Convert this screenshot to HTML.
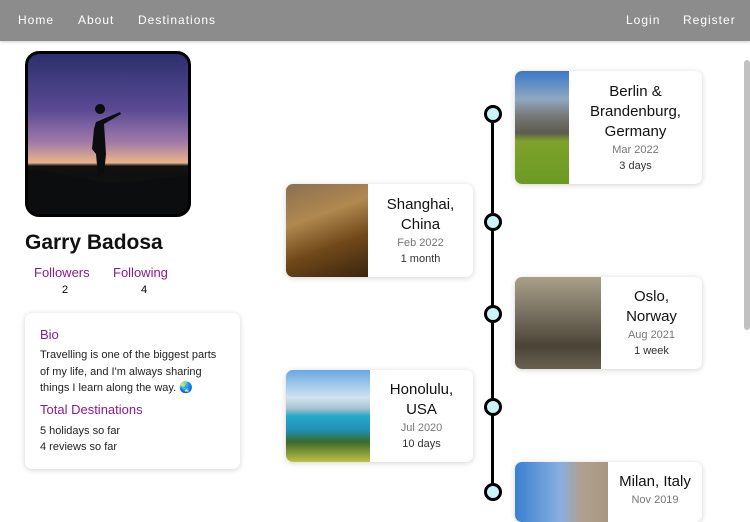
<!DOCTYPE html>
<html><head><style>
*{margin:0;padding:0;box-sizing:border-box}
body{width:750px;height:499px;overflow:hidden;background:#fff;font-family:"Liberation Sans",sans-serif;position:relative}
.nav{position:absolute;left:0;top:0;width:750px;height:41px;background:#8c8c8c;box-shadow:0 1px 3px rgba(0,0,0,.2)}
.nav span{position:absolute;top:13px;color:#fff;font-size:12px;letter-spacing:1px}
.ab{position:absolute}
.pic{left:25px;top:51px;width:166px;height:166px;border:3px solid #000;border-radius:14px;overflow:hidden;background:linear-gradient(180deg,#2d2f6e 0%,#5a4a94 35%,#a07aa8 55%,#e9b58a 68%,#111 70%,#0b0d0e 100%)}
.name{left:25px;top:231px;font-size:21px;font-weight:bold;color:#111}
.purple{color:#8b1a8b}
.card{position:absolute;background:#fff;border-radius:7px;box-shadow:0 1px 6px rgba(0,0,0,.18);overflow:hidden}
.card .img{position:absolute;left:0;top:0;bottom:0}
.card .txt{position:absolute;top:0;bottom:0;right:0;display:flex;flex-direction:column;align-items:center;justify-content:center;text-align:center}
.t{font-family:"Comic Sans MS","Liberation Sans",cursive;font-size:15px;line-height:20px;color:#111}
.d{font-size:11px;color:#777;line-height:16px}
.l{font-size:11px;color:#333;line-height:16px}
.line{left:491px;top:105px;width:3px;height:394px;background:#000}
.dot{position:absolute;left:484px;width:18px;height:18px;border-radius:50%;background:#c8f4f8;border:3px solid #000}
</style></head><body>
<div class="nav"><span style="left:18px">Home</span><span style="left:78px">About</span><span style="left:138px">Destinations</span><span style="left:626px">Login</span><span style="left:683px">Register</span></div>
<div class="ab pic"><svg width="160" height="160" viewBox="0 0 160 160" style="position:absolute;left:0;top:0"><path d="M0 115 Q40 120 70 128 Q110 130 160 120 L160 160 L0 160Z" fill="#0b0d0e"/><path d="M72 60 a5 5 0 1 1 0.1 0 M68 68 L92 58 L93 60 L76 70 L78 100 L76 120 L70 122 L68 100 L64 95 L66 75Z" fill="#0b0d0e"/></svg></div>
<div class="ab name">Garry Badosa</div>
<div class="ab purple" style="left:34px;top:265px;font-size:13px">Followers</div>
<div class="ab purple" style="left:113px;top:265px;font-size:13px">Following</div>
<div class="ab" style="left:62px;top:284px;font-size:11px">2</div>
<div class="ab" style="left:141px;top:284px;font-size:11px">4</div>
<div class="card" style="left:25px;top:313px;width:215px;height:156px">
<div class="ab purple" style="left:15px;top:14px;font-size:13px">Bio</div>
<div class="ab" style="left:15px;top:34px;font-size:11px;line-height:16.5px;color:#222;width:188px">Travelling is one of the biggest parts of my life, and I'm always sharing things I learn along the way. 🌏</div>
<div class="ab purple" style="left:15px;top:89px;font-size:13px">Total Destinations</div>
<div class="ab" style="left:15px;top:110px;font-size:11px;line-height:16px;color:#222">5 holidays so far<br>4 reviews so far</div>
</div>
<div class="ab line"></div>
<div class="dot" style="top:105px"></div>
<div class="dot" style="top:213px"></div>
<div class="dot" style="top:305px"></div>
<div class="dot" style="top:398px"></div>
<div class="dot" style="top:483px"></div>
<div class="card" style="left:515px;top:71px;width:187px;height:113px"><div class="img" style="width:54px;background:linear-gradient(180deg,#3a78c8 0%,#8fa8c0 25%,#777 40%,#5c5c50 55%,#7ea22c 62%,#6b9a22 100%)"></div><div class="txt" style="left:54px"><div class="t">Berlin &amp;<br>Brandenburg,<br>Germany</div><div class="d">Mar 2022</div><div class="l">3 days</div></div></div>
<div class="card" style="left:286px;top:184px;width:187px;height:93px"><div class="img" style="width:82px;background:linear-gradient(160deg,#8a7050 0%,#b08850 35%,#704818 65%,#3a2510 100%)"></div><div class="txt" style="left:82px"><div class="t">Shanghai,<br>China</div><div class="d">Feb 2022</div><div class="l">1 month</div></div></div>
<div class="card" style="left:515px;top:277px;width:187px;height:92px"><div class="img" style="width:86px;background:linear-gradient(180deg,#a8a088 0%,#787060 40%,#4a4436 75%,#6a6050 100%)"></div><div class="txt" style="left:86px"><div class="t">Oslo,<br>Norway</div><div class="d">Aug 2021</div><div class="l">1 week</div></div></div>
<div class="card" style="left:286px;top:370px;width:187px;height:92px"><div class="img" style="width:84px;background:linear-gradient(180deg,#6aa8e0 0%,#d0e4f0 30%,#a8c0d0 42%,#28a8c8 50%,#2090b8 65%,#3a6a2a 78%,#c0c040 100%)"></div><div class="txt" style="left:84px"><div class="t">Honolulu,<br>USA</div><div class="d">Jul 2020</div><div class="l">10 days</div></div></div>
<div class="card" style="left:515px;top:462px;width:187px;height:60px"><div class="img" style="width:93px;background:linear-gradient(90deg,#3a80d0 0%,#8ab0e0 50%,#b0a090 70%,#a89880 100%)"></div><div class="txt" style="left:93px;justify-content:flex-start;padding-top:10px"><div class="t">Milan, Italy</div><div class="d">Nov 2019</div></div></div>
<div class="ab" style="left:744px;top:60px;width:6px;height:270px;background:#c1c1c1;border-radius:3px"></div>
</body></html>
